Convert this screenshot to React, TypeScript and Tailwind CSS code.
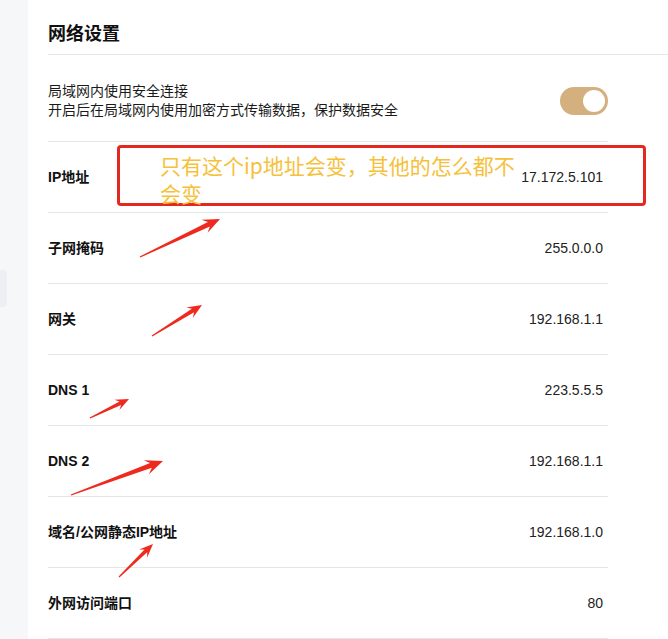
import React from "react";

type Pt = [number, number];

const rows = [
  { label: "IP地址", value: "17.172.5.101" },
  { label: "子网掩码", value: "255.0.0.0" },
  { label: "网关", value: "192.168.1.1" },
  { label: "DNS 1", value: "223.5.5.5" },
  { label: "DNS 2", value: "192.168.1.1" },
  { label: "域名/公网静态IP地址", value: "192.168.1.0" },
  { label: "外网访问端口", value: "80" },
];

// annotation arrows: tail -> head
const arrows: { t: Pt; h: Pt }[] = [
  { t: [140, 257], h: [220, 219] },
  { t: [152, 336], h: [202, 305] },
  { t: [90, 418], h: [129, 399] },
  { t: [71, 495], h: [163, 461] },
  { t: [119, 577], h: [153, 544] },
];

function arrowPoints({ t, h }: { t: Pt; h: Pt }) {
  const dx = h[0] - t[0];
  const dy = h[1] - t[1];
  const len = Math.hypot(dx, dy);
  const ux = dx / len;
  const uy = dy / len;
  const nx = -uy;
  const ny = ux;
  const headLen = 10 + len * 0.08;
  const hw = headLen * 0.42;
  const sw = headLen * 0.28;
  const neck: Pt = [h[0] - ux * headLen * 0.72, h[1] - uy * headLen * 0.72];
  const barb: Pt = [h[0] - ux * headLen, h[1] - uy * headLen];
  const pts: Pt[] = [
    [t[0] + nx * 0.6, t[1] + ny * 0.6],
    [neck[0] + (nx * sw) / 2, neck[1] + (ny * sw) / 2],
    [barb[0] + nx * hw, barb[1] + ny * hw],
    h,
    [barb[0] - nx * hw, barb[1] - ny * hw],
    [neck[0] - (nx * sw) / 2, neck[1] - (ny * sw) / 2],
    [t[0] - nx * 0.6, t[1] - ny * 0.6],
  ];
  return pts.map((p) => `${p[0].toFixed(1)},${p[1].toFixed(1)}`).join(" ");
}

export default function App() {
  return (
    <div className="relative flex min-h-[639px] w-[668px] overflow-hidden bg-white font-['Liberation_Sans','Noto_Sans_CJK_SC',sans-serif] text-[#111]">
      {/* 左侧栏 */}
      <div className="w-[28px] shrink-0 bg-[#f6f7f9] pt-[270px]">
        <div className="h-[37px] w-[7px] rounded-r-[4px] bg-[#eeeff2]" />
      </div>

      {/* 主内容 */}
      <div className="flex-1 pl-[20px]">
        <div className="h-[55px] border-b border-[#e6e6e6] pt-[20px]">
          <h1 className="text-[18px] font-bold leading-[28px]">网络设置</h1>
        </div>

        <div className="mr-[60px]">
          {/* 安全连接开关 */}
          <div className="flex h-[87px] items-center justify-between border-b border-[#e6e6e6] pt-[6px]">
            <div className="text-[14px] leading-[19px] text-[#1a1a1a]">
              <div>局域网内使用安全连接</div>
              <div>开启后在局域网内使用加密方式传输数据，保护数据安全</div>
            </div>
            <div className="flex h-[28px] w-[48px] items-center justify-end rounded-full bg-[#d4b07f] pr-[3px]">
              <div className="h-[22px] w-[22px] rounded-full bg-white" />
            </div>
          </div>

          {rows.map((r) => (
            <div
              key={r.label}
              className="flex h-[71px] items-center justify-between border-b border-[#e6e6e6]"
            >
              <span className="text-[14px] font-bold">{r.label}</span>
              <span className="pr-[5px] text-[14px] text-[#222]">{r.value}</span>
            </div>
          ))}
        </div>
      </div>

      {/* 标注框 */}
      <div className="absolute left-[117px] top-[145px] h-[61px] w-[529px] rounded-[4px] border-[3px] border-[#e3281f] pl-[40px] pt-[3px]">
        <p className="w-[366px] font-['Noto_Sans_CJK_SC',sans-serif] text-[21px] leading-[28px] text-[#f5c13a]">
          只有这个ip地址会变，其他的怎么都不会变
        </p>
      </div>

      {/* 箭头 */}
      <svg
        className="pointer-events-none absolute left-0 top-0"
        width={668}
        height={639}
        viewBox="0 0 668 639"
      >
        {arrows.map((a, i) => (
          <polygon key={i} points={arrowPoints(a)} fill="#ee2a1f" />
        ))}
      </svg>
    </div>
  );
}
